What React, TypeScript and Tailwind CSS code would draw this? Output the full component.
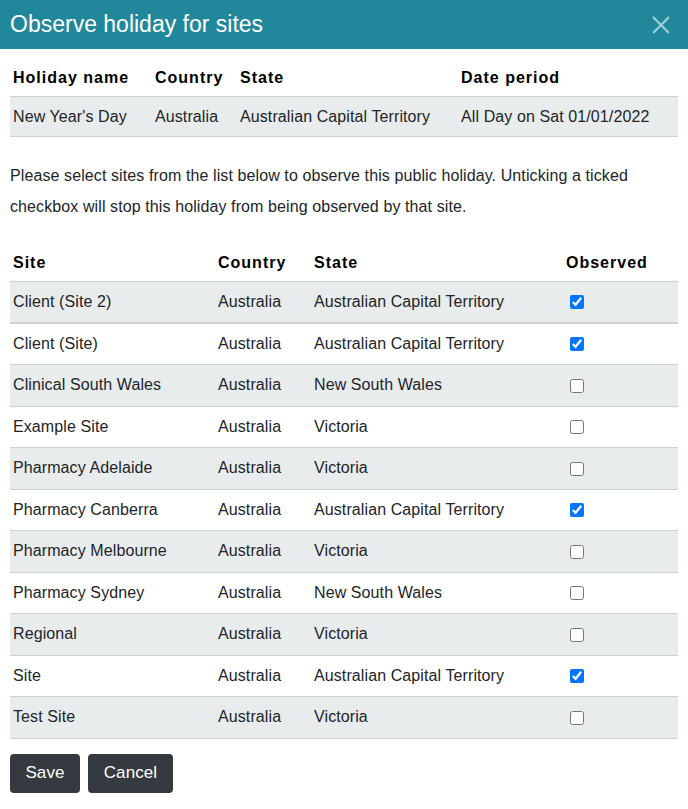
import React from "react";

const sites: [string, string, string, boolean][] = [
  ["Client (Site 2)", "Australia", "Australian Capital Territory", true],
  ["Client (Site)", "Australia", "Australian Capital Territory", true],
  ["Clinical South Wales", "Australia", "New South Wales", false],
  ["Example Site", "Australia", "Victoria", false],
  ["Pharmacy Adelaide", "Australia", "Victoria", false],
  ["Pharmacy Canberra", "Australia", "Australian Capital Territory", true],
  ["Pharmacy Melbourne", "Australia", "Victoria", false],
  ["Pharmacy Sydney", "Australia", "New South Wales", false],
  ["Regional", "Australia", "Victoria", false],
  ["Site", "Australia", "Australian Capital Territory", true],
  ["Test Site", "Australia", "Victoria", false],
];

export default function App() {
  return (
    <div
      className="w-[688px] h-[809px] bg-white text-[16px] text-[#212529] tracking-[0.1px]"
      style={{ fontFamily: '"Liberation Sans", Arial, sans-serif' }}
    >
      <div className="h-[49px] bg-[#21889c] flex items-center justify-between pl-[10px] pr-[16px]">
        <div className="text-white text-[23px] leading-none tracking-normal">Observe holiday for sites</div>
        <svg width="18" height="18" viewBox="0 0 18 18" className="mr-[2px]">
          <path d="M1 1L17 17M17 1L1 17" stroke="#9fcfd8" strokeWidth="2.2" />
        </svg>
      </div>

      <div className="px-[10px]">
        <div className="mt-[11px] grid grid-cols-[142px_85px_221px_1fr]">
          <div className="h-[36px] flex items-center pl-[3px] font-bold text-black tracking-[1px]">Holiday name</div>
          <div className="h-[36px] flex items-center pl-[3px] font-bold text-black tracking-[1px]">Country</div>
          <div className="h-[36px] flex items-center pl-[3px] font-bold text-black tracking-[1px]">State</div>
          <div className="h-[36px] flex items-center pl-[3px] font-bold text-black tracking-[1px]">Date period</div>
          <div className="h-[41px] flex items-center pl-[3px] bg-[#e9ecec] border-y border-[#cdd0d2]">New Year's Day</div>
          <div className="h-[41px] flex items-center pl-[3px] bg-[#e9ecec] border-y border-[#cdd0d2]">Australia</div>
          <div className="h-[41px] flex items-center pl-[3px] bg-[#e9ecec] border-y border-[#cdd0d2]">Australian Capital Territory</div>
          <div className="h-[41px] flex items-center pl-[3px] bg-[#e9ecec] border-y border-[#cdd0d2]">All Day on Sat 01/01/2022</div>
        </div>

        <p className="mt-[23px] leading-[31px]">
          Please select sites from the list below to observe this public holiday. Unticking a ticked checkbox will stop this holiday from being observed by that site.
        </p>

        <div className="mt-[23px]">
          <div className="grid grid-cols-[205px_96px_252px_1fr] h-[37px] items-center border-b border-[#cdd0d2] font-bold text-black tracking-[1px]">
            <div className="pl-[3px]">Site</div>
            <div className="pl-[3px]">Country</div>
            <div className="pl-[3px]">State</div>
            <div className="pl-[3px]">Observed</div>
          </div>
          {sites.map(([name, country, state, obs], i) => (
            <div
              key={name}
              className={`grid grid-cols-[205px_96px_252px_1fr] h-[41.5px] items-center border-b border-[#cdd0d2] ${
                i % 2 === 0 ? "bg-[#e9ecec]" : "bg-white"
              } ${i === 0 ? "border-b-2" : ""}`}
            >
              <div className="pl-[3px]">{name}</div>
              <div className="pl-[3px]">{country}</div>
              <div className="pl-[3px]">{state}</div>
              <div className="pl-[7px] flex items-center pt-[1px]">
                <input type="checkbox" defaultChecked={obs} className="m-0 w-[14px] h-[14px]" />
              </div>
            </div>
          ))}
        </div>

        <div className="mt-[15px] flex gap-[8px]">
          <button className="w-[70px] h-[39px] rounded-[4px] bg-[#343a40] text-white text-[17px]">Save</button>
          <button className="w-[85px] h-[39px] rounded-[4px] bg-[#343a40] text-white text-[17px]">Cancel</button>
        </div>
      </div>
    </div>
  );
}
